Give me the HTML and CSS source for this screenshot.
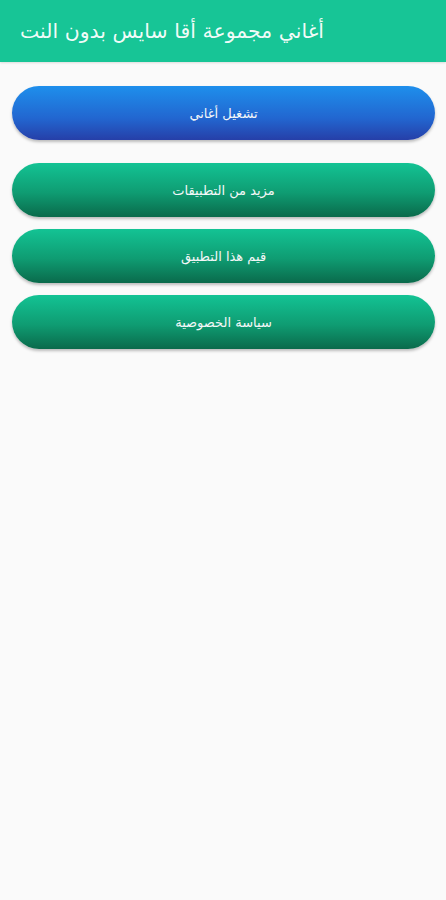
FILE: index.html
```html
<!DOCTYPE html>
<html lang="ar">
<head>
<meta charset="utf-8">
<link rel="stylesheet" href="styles.css">
</head>
<body>
<header class="bar"><span class="title" dir="rtl">أغاني مجموعة أقا سايس بدون النت</span></header>
<main class="list">
  <div class="btn blue" dir="rtl">تشغيل أغاني</div>
  <div class="greens">
    <div class="btn green" dir="rtl">مزيد من التطبيقات</div>
    <div class="btn green" dir="rtl">قيم هذا التطبيق</div>
    <div class="btn green" dir="rtl">سياسة الخصوصية</div>
  </div>
</main>
</body>
</html>
```
FILE: styles.css
```css
html, body { margin: 0; padding: 0; }
body {
  background: #fafafa;
  width: 446px;
  height: 900px;
  font-family: "DejaVu Sans", sans-serif;
}
.bar {
  height: 62px;
  background: #17c596;
  display: flex;
  align-items: center;
  padding-left: 20px;
  box-shadow: 0 1px 2px rgba(0,0,0,0.12);
}
.title {
  color: rgba(255,255,255,0.95);
  font-size: 20.4px;
  word-spacing: 0.2px;
}
.list {
  padding: 24px 11px 0 12px;
  display: flex;
  flex-direction: column;
  gap: 23px;
}
.greens {
  display: flex;
  flex-direction: column;
  gap: 12px;
}
.btn {
  height: 54px;
  border-radius: 27px;
  display: flex;
  align-items: center;
  justify-content: center;
  color: #f4f7f8;
  font-size: 13px;
  box-shadow: 0 2px 3px rgba(0,0,0,0.25);
}
.blue {
  background: linear-gradient(to bottom, #1e8fec 0%, #2266d0 60%, #263fa8 100%);
}
.green {
  background: linear-gradient(to bottom, #13c394 0%, #0f9c72 55%, #0a6a4b 100%);
}
```
